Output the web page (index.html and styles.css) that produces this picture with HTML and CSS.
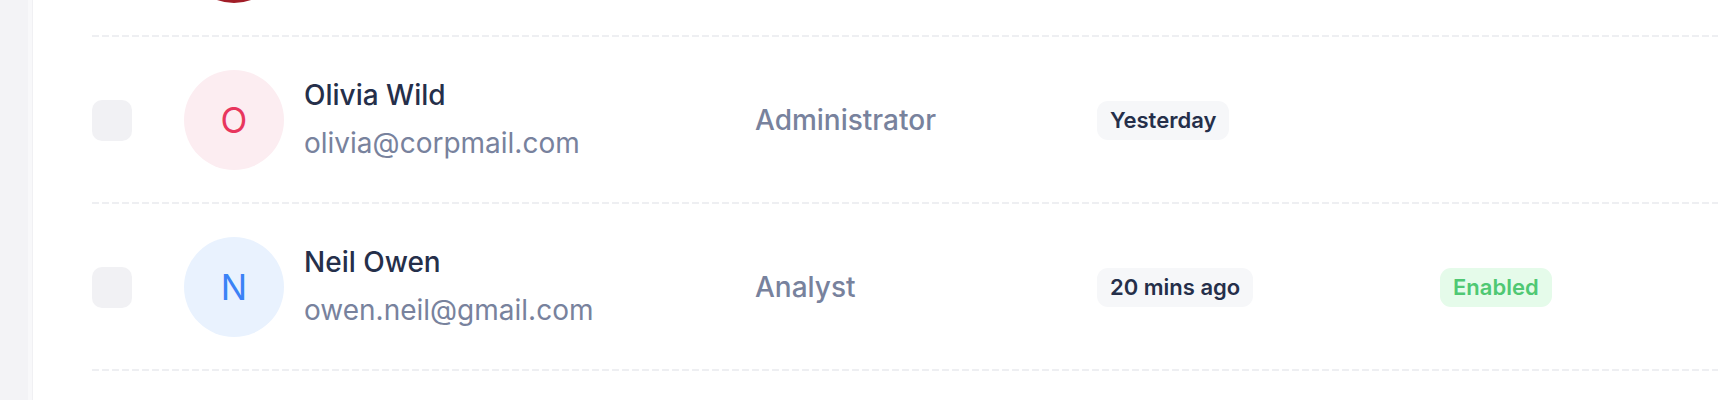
FILE: index.html
```html
<!DOCTYPE html>
<html lang="en">
<head>
<meta charset="utf-8">
<title>Users</title>
<link rel="stylesheet" href="styles.css">
</head>
<body>
<div class="page">
  <aside class="strip"></aside>
  <main class="content">
    <div class="table">
      <div class="row">
        <div class="cell"><span class="check"></span></div>
        <div class="cell user">
          <span class="avatar avatar-photo"></span>
        </div>
        <div class="cell role"></div>
        <div class="cell"></div>
        <div class="cell"></div>
      </div>
      <div class="row">
        <div class="cell"><span class="check"></span></div>
        <div class="cell user">
          <span class="avatar avatar-pink">O</span>
          <div class="info">
            <span class="name">Olivia Wild</span>
            <span class="email">olivia@corpmail.com</span>
          </div>
        </div>
        <div class="cell role">Administrator</div>
        <div class="cell"><span class="badge">Yesterday</span></div>
        <div class="cell"></div>
      </div>
      <div class="row">
        <div class="cell"><span class="check"></span></div>
        <div class="cell user">
          <span class="avatar avatar-blue">N</span>
          <div class="info">
            <span class="name">Neil Owen</span>
            <span class="email">owen.neil@gmail.com</span>
          </div>
        </div>
        <div class="cell role">Analyst</div>
        <div class="cell"><span class="badge">20 mins ago</span></div>
        <div class="cell"><span class="badge badge-success">Enabled</span></div>
      </div>
    </div>
  </main>
</div>
</body>
</html>
```
FILE: styles.css
```css
html, body {
  margin: 0;
  padding: 0;
  background: #ffffff;
  overflow: hidden;
}

body {
  font-family: "Inter", "Noto Sans", sans-serif;
  width: 1718px;
  height: 400px;
}

.page {
  display: flex;
  height: 400px;
  overflow: hidden;
}

.strip {
  width: 32px;
  flex: none;
  background: linear-gradient(90deg, #f3f3f6 0 28px, #f8f8fa 28px 32px);
  border-right: 1px solid #f0f0f3;
}

.content {
  flex: 1;
  padding-left: 59px;
  overflow: hidden;
}

.table {
  margin-top: -130px;
}

.row {
  display: grid;
  grid-template-columns: 92px 571px 342px 343px 1fr;
  align-items: center;
  padding: 33px 0 34px;
  background-image: repeating-linear-gradient(90deg, #eeeff2 0 7px, transparent 7px 10px);
  background-size: 100% 2px;
  background-position: left bottom;
  background-repeat: no-repeat;
}

.cell {
  display: flex;
  align-items: center;
  min-height: 100px;
}

.check {
  display: block;
  width: 40px;
  height: 41px;
  border-radius: 10px;
  background: #f1f1f4;
}

.user {
  gap: 20px;
}

.avatar {
  width: 100px;
  height: 100px;
  border-radius: 50%;
  display: flex;
  align-items: center;
  justify-content: center;
  font-size: 35px;
  font-weight: 400;
  flex: none;
}

.avatar-photo {
  background: #a11d27;
}

.avatar-pink {
  background: #fcedf1;
  color: #e8365d;
}

.avatar-blue {
  background: #e9f2fe;
  color: #3b82f6;
}

.info {
  display: flex;
  flex-direction: column;
  padding-bottom: 4px;
}

.name {
  font-size: 28px;
  line-height: 40px;
  font-weight: 500;
  color: #252f4a;
}

.email {
  margin-top: 10px;
  font-size: 28px;
  line-height: 36px;
  font-weight: 400;
  color: #78829d;
}

.role {
  font-size: 28px;
  font-weight: 500;
  color: #78829d;
}

.badge {
  display: inline-block;
  font-size: 22px;
  line-height: 22px;
  font-weight: 600;
  color: #252f4a;
  background: #f6f7f9;
  border-radius: 11px;
  padding: 8.5px 13px;
}

.badge-success {
  color: #4fc873;
  background: #e5fbea;
}
```
